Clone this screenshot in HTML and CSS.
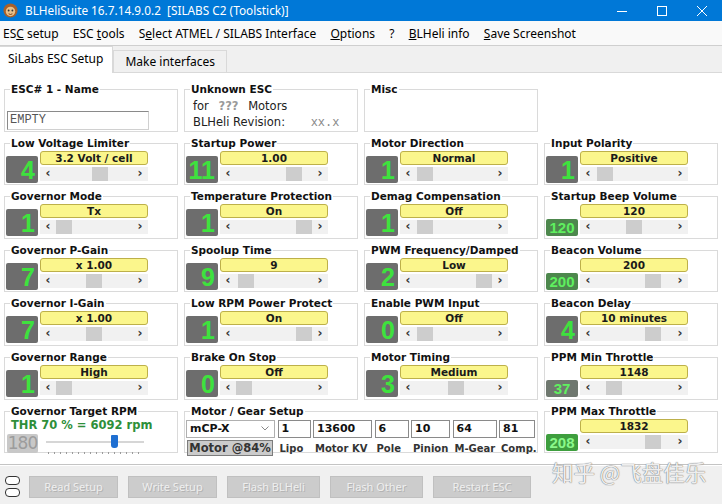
FILE: index.html
```html
<!DOCTYPE html>
<html lang="en">
<head>
<meta charset="UTF-8">
<title>BLHeliSuite</title>
<link rel="stylesheet" href="styles.css">
</head>
<body>
<div class="titlebar">
  <svg class="app-icon" viewBox="0 0 16 16"><circle cx="8" cy="8" r="7.5" fill="#a8602a"/><circle cx="8" cy="9" r="5" fill="#e8c08a"/><circle cx="6" cy="8" r="1" fill="#333"/><circle cx="10" cy="8" r="1" fill="#333"/><path d="M6 11.5 Q8 13 10 11.5" stroke="#7a3a10" fill="none"/></svg>
  <div class="title">BLHeliSuite 16.7.14.9.0.2&nbsp; [SILABS C2 (Toolstick)]</div>
  <div class="winbtns">
    <span><svg width="10" height="10" viewBox="0 0 10 10"><path d="M0 5.5H10" stroke="#fff"/></svg></span>
    <span><svg width="10" height="10" viewBox="0 0 10 10"><rect x="0.5" y="0.5" width="9" height="9" fill="none" stroke="#fff"/></svg></span>
    <span><svg width="10" height="10" viewBox="0 0 10 10"><path d="M0 0L10 10M10 0L0 10" stroke="#fff"/></svg></span>
  </div>
</div>

<div class="menubar">
  <span>ES<u>C</u> setup</span>
  <span>ESC <u>t</u>ools</span>
  <span>S<u>e</u>lect ATMEL / SILABS Interface</span>
  <span><u>O</u>ptions</span>
  <span>?</span>
  <span><u>B</u>LHeli info</span>
  <span><u>S</u>ave Screenshot</span>
</div>

<div class="tabs">
  <div class="tab active">SiLabs ESC Setup</div>
  <div class="tab">Make interfaces</div>
</div>

<div class="content">
  <!-- row 1 -->
  <fieldset class="box">
    <legend>ESC# 1 - Name</legend>
    <div class="name-input">EMPTY</div>
  </fieldset>
  <fieldset class="box">
    <legend>Unknown ESC</legend>
    <div class="info">for <b class="dim">???</b> Motors</div>
    <div class="info">BLHeli Revision: <span class="rev">xx.x</span></div>
  </fieldset>
  <fieldset class="box">
    <legend>Misc</legend>
  </fieldset>
  <div></div>

  <!-- row 2 -->
  <fieldset class="box">
    <legend>Low Voltage Limiter</legend>
    <div class="ctl"><div class="num">4</div><div class="pick"><div class="val">3.2 Volt / cell</div>
    <div class="scroll"><span class="arrow">&lsaquo;</span><div class="track"><div class="thumb" style="margin-left:36px"></div></div><span class="arrow">&rsaquo;</span></div></div></div>
  </fieldset>
  <fieldset class="box">
    <legend>Startup Power</legend>
    <div class="ctl"><div class="num">11</div><div class="pick"><div class="val">1.00</div>
    <div class="scroll"><span class="arrow">&lsaquo;</span><div class="track"><div class="thumb" style="margin-left:50px"></div></div><span class="arrow">&rsaquo;</span></div></div></div>
  </fieldset>
  <fieldset class="box">
    <legend>Motor Direction</legend>
    <div class="ctl"><div class="num">1</div><div class="pick"><div class="val">Normal</div>
    <div class="scroll"><span class="arrow">&lsaquo;</span><div class="track"><div class="thumb" style="margin-left:1px"></div></div><span class="arrow">&rsaquo;</span></div></div></div>
  </fieldset>
  <fieldset class="box">
    <legend>Input Polarity</legend>
    <div class="ctl"><div class="num">1</div><div class="pick"><div class="val">Positive</div>
    <div class="scroll"><span class="arrow">&lsaquo;</span><div class="track"><div class="thumb" style="margin-left:1px"></div></div><span class="arrow">&rsaquo;</span></div></div></div>
  </fieldset>

  <!-- row 3 -->
  <fieldset class="box">
    <legend>Governor Mode</legend>
    <div class="ctl"><div class="num">1</div><div class="pick"><div class="val">Tx</div>
    <div class="scroll"><span class="arrow">&lsaquo;</span><div class="track"><div class="thumb" style="margin-left:0px"></div></div><span class="arrow">&rsaquo;</span></div></div></div>
  </fieldset>
  <fieldset class="box">
    <legend>Temperature Protection</legend>
    <div class="ctl"><div class="num">1</div><div class="pick"><div class="val">On</div>
    <div class="scroll"><span class="arrow">&lsaquo;</span><div class="track"><div class="thumb" style="margin-left:60px"></div></div><span class="arrow">&rsaquo;</span></div></div></div>
  </fieldset>
  <fieldset class="box">
    <legend>Demag Compensation</legend>
    <div class="ctl"><div class="num">1</div><div class="pick"><div class="val">Off</div>
    <div class="scroll"><span class="arrow">&lsaquo;</span><div class="track"><div class="thumb" style="margin-left:1px"></div></div><span class="arrow">&rsaquo;</span></div></div></div>
  </fieldset>
  <fieldset class="box">
    <legend>Startup Beep Volume</legend>
    <div class="ctl"><div class="num small">120</div><div class="pick"><div class="val">120</div>
    <div class="scroll"><span class="arrow">&lsaquo;</span><div class="track"><div class="thumb" style="margin-left:30px"></div></div><span class="arrow">&rsaquo;</span></div></div></div>
  </fieldset>

  <!-- row 4 -->
  <fieldset class="box">
    <legend>Governor P-Gain</legend>
    <div class="ctl"><div class="num">7</div><div class="pick"><div class="val">x 1.00</div>
    <div class="scroll"><span class="arrow">&lsaquo;</span><div class="track"><div class="thumb" style="margin-left:30px"></div></div><span class="arrow">&rsaquo;</span></div></div></div>
  </fieldset>
  <fieldset class="box">
    <legend>Spoolup Time</legend>
    <div class="ctl"><div class="num">9</div><div class="pick"><div class="val">9</div>
    <div class="scroll"><span class="arrow">&lsaquo;</span><div class="track"><div class="thumb" style="margin-left:2px"></div></div><span class="arrow">&rsaquo;</span></div></div></div>
  </fieldset>
  <fieldset class="box">
    <legend>PWM Frequency/Damped</legend>
    <div class="ctl"><div class="num">2</div><div class="pick"><div class="val">Low</div>
    <div class="scroll"><span class="arrow">&lsaquo;</span><div class="track"><div class="thumb" style="margin-left:60px"></div></div><span class="arrow">&rsaquo;</span></div></div></div>
  </fieldset>
  <fieldset class="box">
    <legend>Beacon Volume</legend>
    <div class="ctl"><div class="num small">200</div><div class="pick"><div class="val">200</div>
    <div class="scroll"><span class="arrow">&lsaquo;</span><div class="track"><div class="thumb" style="margin-left:49px"></div></div><span class="arrow">&rsaquo;</span></div></div></div>
  </fieldset>

  <!-- row 5 -->
  <fieldset class="box">
    <legend>Governor I-Gain</legend>
    <div class="ctl"><div class="num">7</div><div class="pick"><div class="val">x 1.00</div>
    <div class="scroll"><span class="arrow">&lsaquo;</span><div class="track"><div class="thumb" style="margin-left:30px"></div></div><span class="arrow">&rsaquo;</span></div></div></div>
  </fieldset>
  <fieldset class="box">
    <legend>Low RPM Power Protect</legend>
    <div class="ctl"><div class="num">1</div><div class="pick"><div class="val">On</div>
    <div class="scroll"><span class="arrow">&lsaquo;</span><div class="track"><div class="thumb" style="margin-left:60px"></div></div><span class="arrow">&rsaquo;</span></div></div></div>
  </fieldset>
  <fieldset class="box">
    <legend>Enable PWM Input</legend>
    <div class="ctl"><div class="num">0</div><div class="pick"><div class="val">Off</div>
    <div class="scroll"><span class="arrow">&lsaquo;</span><div class="track"><div class="thumb" style="margin-left:1px"></div></div><span class="arrow">&rsaquo;</span></div></div></div>
  </fieldset>
  <fieldset class="box">
    <legend>Beacon Delay</legend>
    <div class="ctl"><div class="num">4</div><div class="pick"><div class="val">10 minutes</div>
    <div class="scroll"><span class="arrow">&lsaquo;</span><div class="track"><div class="thumb" style="margin-left:49px"></div></div><span class="arrow">&rsaquo;</span></div></div></div>
  </fieldset>

  <!-- row 6 -->
  <fieldset class="box">
    <legend>Governor Range</legend>
    <div class="ctl"><div class="num">1</div><div class="pick"><div class="val">High</div>
    <div class="scroll"><span class="arrow">&lsaquo;</span><div class="track"><div class="thumb" style="margin-left:0px"></div></div><span class="arrow">&rsaquo;</span></div></div></div>
  </fieldset>
  <fieldset class="box">
    <legend>Brake On Stop</legend>
    <div class="ctl"><div class="num">0</div><div class="pick"><div class="val">Off</div>
    <div class="scroll"><span class="arrow">&lsaquo;</span><div class="track"><div class="thumb" style="margin-left:0px"></div></div><span class="arrow">&rsaquo;</span></div></div></div>
  </fieldset>
  <fieldset class="box">
    <legend>Motor Timing</legend>
    <div class="ctl"><div class="num">3</div><div class="pick"><div class="val">Medium</div>
    <div class="scroll"><span class="arrow">&lsaquo;</span><div class="track"><div class="thumb" style="margin-left:32px"></div></div><span class="arrow">&rsaquo;</span></div></div></div>
  </fieldset>
  <fieldset class="box">
    <legend>PPM Min Throttle</legend>
    <div class="ctl"><div class="num small grey">37</div><div class="pick"><div class="val">1148</div>
    <div class="scroll"><span class="arrow">&lsaquo;</span><div class="track"><div class="thumb" style="margin-left:10px"></div></div><span class="arrow">&rsaquo;</span></div></div></div>
  </fieldset>

  <!-- row 7 -->
  <fieldset class="box">
    <legend>Governor Target RPM</legend>
    <div class="thr">THR 70 % = 6092 rpm</div>
    <div class="rpm-row">
      <div class="rpmbox">180</div>
      <div class="slider"><div class="slider-thumb" style="margin-left:65px"></div></div>
    </div>
  </fieldset>
  <fieldset class="box gear">
    <legend>Motor / Gear Setup</legend>
    <div class="gear-grid">
      <div class="field combo">mCP-X<svg width="8" height="5" viewBox="0 0 8 5"><path d="M0.5 0.5L4 4L7.5 0.5" stroke="#888" fill="none"/></svg></div>
      <div class="field">1</div>
      <div class="field">13600</div>
      <div class="field">6</div>
      <div class="field">10</div>
      <div class="field">64</div>
      <div class="field">81</div>
      <div class="motor-btn">Motor @84%</div>
      <div class="lbl">Lipo</div>
      <div class="lbl">Motor KV</div>
      <div class="lbl">Pole</div>
      <div class="lbl">Pinion</div>
      <div class="lbl">M-Gear</div>
      <div class="lbl">Comp.</div>
    </div>
  </fieldset>
  <fieldset class="box">
    <legend>PPM Max Throttle</legend>
    <div class="ctl"><div class="num small bright">208</div><div class="pick"><div class="val">1832</div>
    <div class="scroll"><span class="arrow">&lsaquo;</span><div class="track"><div class="thumb" style="margin-left:49px"></div></div><span class="arrow">&rsaquo;</span></div></div></div>
  </fieldset>
</div>

<div class="bottombar">
  <div class="ports"><span></span><span></span></div>
  <div class="btn w89">Read Setup</div>
  <div class="btn w89">Write Setup</div>
  <div class="btn w93">Flash BLHeli</div>
  <div class="btn w93">Flash Other</div>
  <div class="btn w98">Restart ESC</div>
</div>

<div class="watermark">知乎 @飞盘佳乐</div>
</body>
</html>
```

FILE: styles.css
```css
*{
  margin:0;
  padding:0;
  box-sizing:border-box;
}

body{
  width:722px;
  height:504px;
  overflow:hidden;
  position:relative;
  background:#f0f0f0;
  font-family:"Noto Sans",sans-serif;
  font-size:12px;
  color:#000;
}

/* window chrome */
.titlebar{
  height:21px;
  background:#0078d7;
  color:#fff;
  display:flex;
  align-items:center;
  padding-left:3px;
}
.app-icon{
  width:15px;
  height:15px;
  margin-right:7px;
}
.title{
  flex:1;
  font-size:11.8px;
  line-height:21px;
}
.winbtns{
  display:flex;
  height:100%;
}
.winbtns span{
  width:40px;
  display:flex;
  align-items:center;
  justify-content:center;
}

.menubar{
  height:25px;
  background:#f9f9f9;
  border-bottom:1px solid #cfcfcf;
  display:flex;
  align-items:center;
  gap:14.2px;
  padding-left:3px;
  font-size:12px;
}

.tabs{
  height:27px;
  background:#f0f0f0;
  border-bottom:1px solid #d9d9d9;
  display:flex;
  align-items:flex-end;
}
.tab{
  height:22px;
  line-height:21px;
  padding:0 11px;
  background:#f0f0f0;
  border:1px solid #d9d9d9;
  border-bottom:none;
}
.tab.active{
  height:27px;
  line-height:24px;
  margin-bottom:-1px;
  padding:0 9px 0 8px;
  background:#fff;
  border-left:none;
}

/* settings grid */
.content{
  height:392px;
  background:#fff;
  border-bottom:1px solid #c4c4c4;
  padding:10px 0 0 4px;
  display:grid;
  grid-template-columns:repeat(4,174px);
  grid-template-rows:repeat(7,48.6px);
  column-gap:6px;
  row-gap:5px;
  align-content:start;
}

.box{
  border:1px solid #dadada;
  margin:0;
  padding:0 1px;
  min-width:0;
  height:100%;
}
.box legend{
  margin-left:4px;
  padding:0 1px;
  font:bold 10.5px/13px "DejaVu Sans",sans-serif;
  color:#111;
}

.ctl{
  display:flex;
  align-items:flex-end;
  gap:2px;
  margin-top:1px;
}
.num{
  width:32px;
  height:27px;
  background:#6d6d6d;
  border-radius:2px;
  color:#3ee23e;
  font:bold 25px/28px "Liberation Sans",sans-serif;
  text-align:right;
  padding-right:3px;
  white-space:nowrap;
}
.num.small{
  height:17px;
  font-size:15px;
  line-height:17px;
  text-align:center;
  padding:0;
  background:#4d874d;
  color:#5ff05f;
}
.num.small.grey{
  background:#6f786f;
}
.num.small.bright{
  background:#3e9e3e;
  color:#8af88a;
}
.pick{
  width:108px;
}
.val{
  height:14px;
  border:1px solid #bdb04a;
  border-radius:3px;
  background:#fbf68c;
  font:bold 10.5px/12px "DejaVu Sans",sans-serif;
  text-align:center;
  color:#1a1a1a;
}
.scroll{
  height:14px;
  margin:2px 0;
  background:#f1f1f1;
  display:flex;
}
.arrow{
  width:16px;
  text-align:center;
  font:bold 12px/13px "DejaVu Sans",sans-serif;
  color:#333;
}
.track{
  flex:1;
}
.thumb{
  width:16px;
  height:14px;
  background:#cdcdcd;
}

/* first row */
.name-input{
  width:142px;
  height:19px;
  margin:15px 0 0 1px;
  border:1px solid #8a8a8a;
  border-right-color:#d0d0d0;
  border-bottom-color:#d0d0d0;
  padding-left:2px;
  font:12px/17px "Liberation Mono",monospace;
  color:#555;
}
.info{
  padding-left:7px;
  font:11.5px/16px "DejaVu Sans",sans-serif;
  color:#222;
}
.info:first-of-type{
  margin-top:2px;
}
.dim{
  color:#9a9a9a;
  margin:0 6px;
}
.rev{
  margin-left:22px;
  font:12px "Liberation Mono",monospace;
  color:#888;
}

/* governor target */
.thr{
  padding-left:5px;
  font:bold 11.5px/15px "DejaVu Sans",sans-serif;
  color:#2e8f3a;
}
.rpm-row{
  display:flex;
  align-items:flex-start;
  gap:8px;
  margin-top:1px;
}
.rpmbox{
  width:31px;
  height:19px;
  background:#c8c8c8;
  border-radius:2px;
  color:#9c9c9c;
  font:17px/19px "DejaVu Sans",sans-serif;
  text-align:center;
  letter-spacing:-1px;
  margin-left:1px;
}
.slider{
  width:98px;
  height:21px;
  padding-top:1px;
  background:
    linear-gradient(#d6d6d6,#d6d6d6) 0 7px/100% 2px no-repeat,
    repeating-linear-gradient(90deg,#9a9a9a 0 1px,transparent 1px 6px) 2px 18px/96px 2px no-repeat;
}
.slider-thumb{
  width:7px;
  height:13px;
  background:#1f6fd1;
  border-radius:1px 1px 3px 3px;
}

/* motor / gear */
.gear{
  grid-column:span 2;
}
.gear-grid{
  display:grid;
  grid-template-columns:89px 33px 59px 34px 39px 44px 36px;
  grid-template-rows:18px 16px;
  column-gap:2.5px;
  row-gap:2px;
  margin-top:2px;
}
.field{
  border:1px solid #8a8a8a;
  background:#fff;
  padding-left:3px;
  font:bold 11px/16px "DejaVu Sans",sans-serif;
  color:#111;
}
.combo{
  display:flex;
  align-items:center;
  justify-content:space-between;
  padding-right:5px;
  border-color:#b0b0b0;
}
.motor-btn{
  background:#cbcbcb;
  border:1px solid #7c7c7c;
  font:bold 11.5px/14px "DejaVu Sans",sans-serif;
  color:#333;
  text-align:center;
  margin-left:1px;
  width:86px;
}
.lbl{
  padding-left:2px;
  font:bold 10px/17px "DejaVu Sans",sans-serif;
  color:#333;
  white-space:nowrap;
}

/* bottom buttons */
.bottombar{
  height:39px;
  border-top:1px solid #fff;
  display:flex;
  align-items:flex-start;
  padding:10px 0 0 5px;
}
.ports{
  display:flex;
  flex-direction:column;
  gap:3px;
  margin-right:9px;
}
.ports span{
  width:15px;
  height:9px;
  border:1px solid #333;
  border-radius:4px;
  background:#fff;
}
.btn{
  height:22px;
  margin-right:10px;
  background:#cccccc;
  border:1px solid #c0c0c0;
  color:#efefef;
  text-shadow:1px 1px 0 #b3b3b3;
  font-size:11px;
  line-height:20px;
  text-align:center;
}
.w89{width:89px;}
.w93{width:93px;}
.w98{width:98px;}

.watermark{
  position:absolute;
  left:552px;
  top:457px;
  white-space:nowrap;
  font:21.5px/30px "Noto Sans CJK SC",sans-serif;
  color:rgba(255,255,255,0.9);
  text-shadow:0 0 1px #777,0 0 1px #777;
}
```
